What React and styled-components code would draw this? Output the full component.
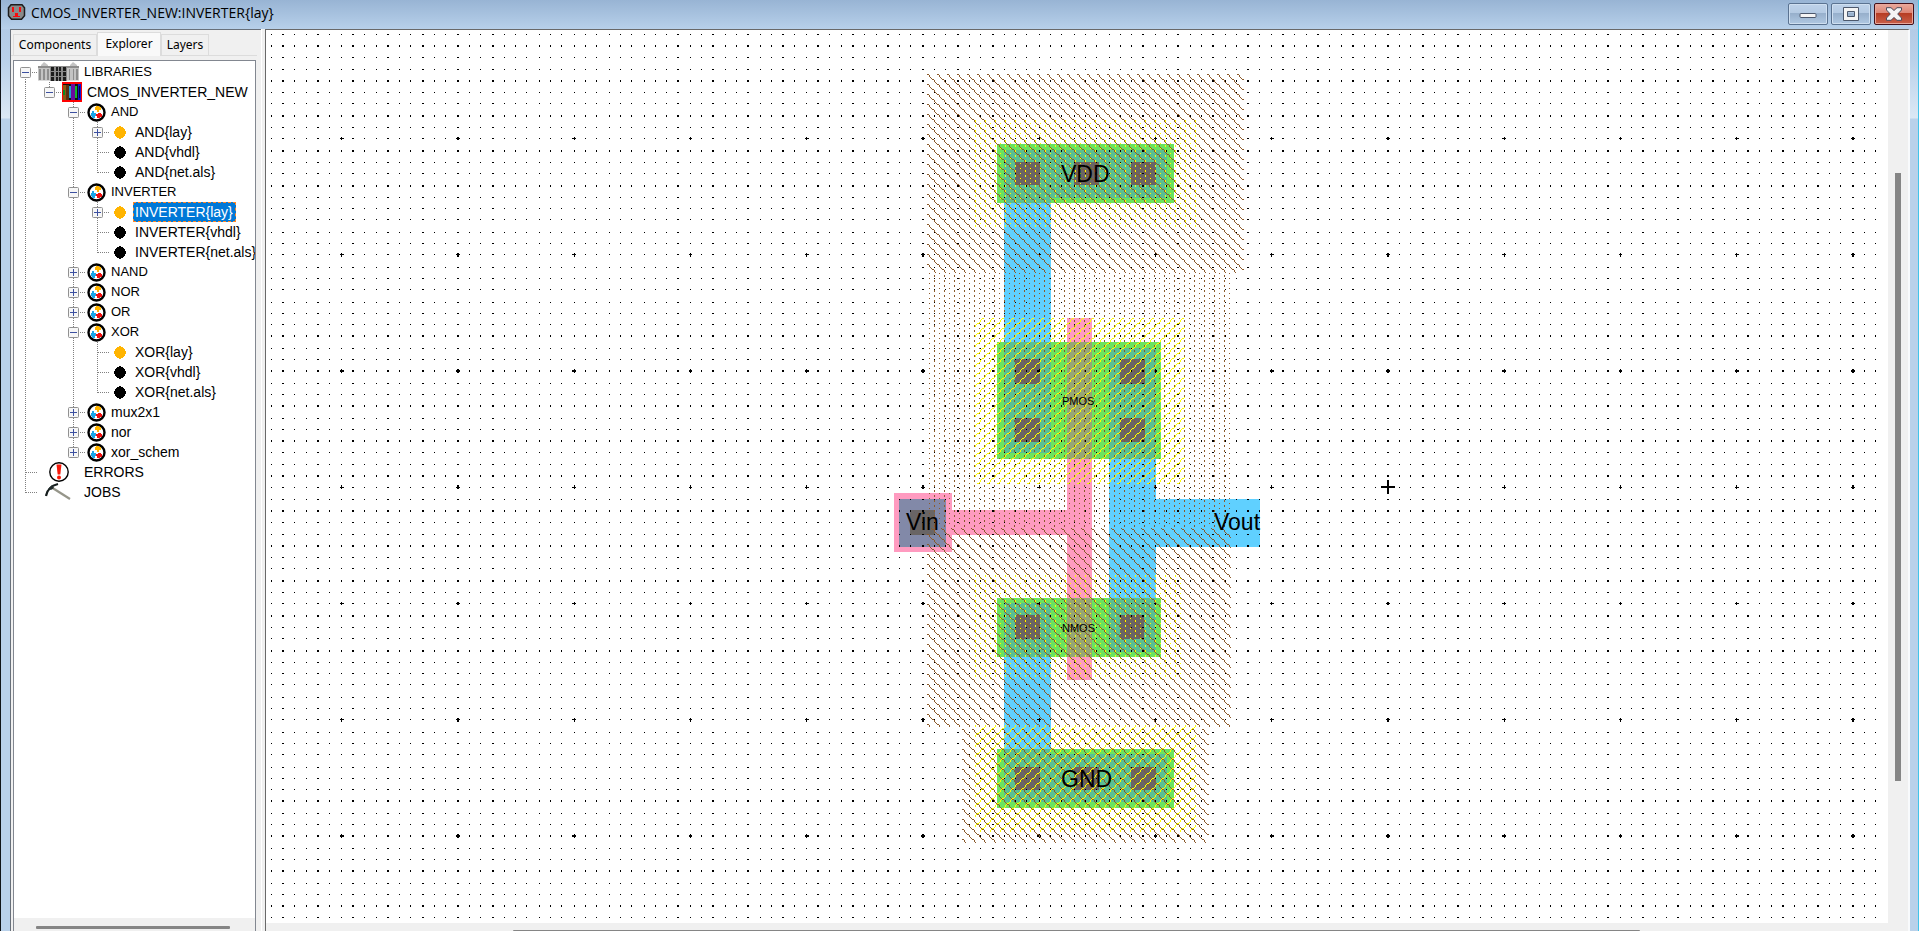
import React from 'react';
import styled, { createGlobalStyle, css } from 'styled-components';

const GlobalStyle = createGlobalStyle`
  * { box-sizing: border-box; }
  html, body { margin: 0; height: 100%; overflow: hidden; }
  #root { height: 100vh; }
  button { font: inherit; }
`;

const Window = styled.div`
  height: 100%;
  display: flex;
  flex-direction: column;
  border-left: 1px solid #101418;
  border-right: 1px solid #42c4ea;
  font-family: "Liberation Sans", Arial, sans-serif;
  color: #000;
  background: linear-gradient(to bottom, #9bb6d5 0, #b3cbe6 29px, #b9d1ea 60px, #dbe8f5 118px, #b9d1ea 119px);
`;

const TitleBar = styled.header`
  flex: none;
  height: 29px;
  display: flex;
  align-items: flex-start;
  gap: 5px;
  padding: 3px 4px 0 6px;
  background: linear-gradient(to bottom, #98b4d4, #b7d0ea);
`;

const Title = styled.h1`
  flex: 1;
  margin: 0;
  font: 400 14px/20px "Open Sans", "Noto Sans", sans-serif;
`;

const Controls = styled.div`
  display: flex;
  gap: 3px;
`;

const ControlButton = styled.button`
  width: 40px;
  height: 22px;
  padding: 0;
  display: grid;
  place-items: center;
  border: 1px solid ${(p) => (p.$danger ? '#43101a' : '#5b7391')};
  border-radius: 2px;
  box-shadow: inset 0 0 0 1px ${(p) => (p.$danger ? '#e8a79b' : '#cfdff0')};
  background: ${(p) =>
    p.$danger
      ? 'linear-gradient(#e9a99c 0, #dc8474 45%, #b63b22 46%, #c9604a 100%)'
      : 'linear-gradient(#bed2e9 0, #b4cae3 45%, #96afcb 46%, #b0c8e2 100%)'};
`;

const Body = styled.div`
  flex: 1;
  min-height: 0;
  display: flex;
  padding: 0 8px 0 9px;
`;

const Sidebar = styled.aside`
  flex: none;
  width: 251px;
  display: flex;
  flex-direction: column;
  border-top: 1px solid #68707a;
  border-left: 1px solid #68707a;
  background: #f0f0f0;
`;

const Tabs = styled.div`
  flex: none;
  display: flex;
  align-items: flex-end;
  height: 26px;
  padding-left: 2px;
  margin-right: 4px;
  border-bottom: 1px solid #dcdcdc;
`;

const Tab = styled.button`
  height: 21px;
  padding: 0;
  width: ${(p) => p.$width}px;
  border: 1px solid #dcdcdc;
  border-bottom: 0;
  background: #f0f0f0;
  font: 400 12px/20px "Noto Sans", "Open Sans", sans-serif;
  ${(p) =>
    p.$selected &&
    css`
      height: 24px;
      margin-bottom: -1px;
      padding-bottom: 2px;
      background: #f9f9f9;
    `}
`;

const TreePane = styled.div`
  flex: 1;
  min-height: 0;
  display: flex;
  flex-direction: column;
  margin: 4px 5px 0 2px;
  border: 1px solid #828790;
  border-bottom: 0;
  background: #fff;
`;

const Tree = styled.ul`
  flex: 1;
  min-height: 0;
  margin: 0;
  padding: 1px 0 0;
  list-style: none;
  overflow: hidden;
`;

const Row = styled.li`
  display: flex;
  height: 20px;
  align-items: center;
  white-space: nowrap;
`;

const Guide = styled.svg`
  flex: none;
  width: 24px;
  height: 20px;
`;

const IconBox = styled.span`
  flex: none;
  width: ${(p) => p.$width}px;
  height: 20px;
  display: grid;
  place-items: center;
  margin-right: 5px;
`;

const Label = styled.span`
  font-size: ${(p) => p.$size}px;
  line-height: 20px;
  ${(p) =>
    p.$selected &&
    css`
      margin-left: -2px;
      padding: 0 2px 0 1px;
      border: 1px dashed #ff8728;
      line-height: 18px;
      color: #fff;
      background: #0078d7;
    `}
`;

const ScrollTrack = styled.div`
  flex: none;
  height: ${(p) => p.$height}px;
  padding: ${(p) => p.$pad};
  background: #f0f0f0;
`;

const ScrollThumb = styled.div`
  height: 3px;
  border-radius: 1px;
  background: #858585;
`;

const Divider = styled.div`
  flex: none;
  width: 4px;
  background: linear-gradient(to right, #fff 1px, #f0f0f0 1px);
`;

const Editor = styled.main`
  flex: 1;
  min-width: 0;
  display: flex;
  flex-direction: column;
  border-top: 1px solid #696969;
  border-left: 1px solid #696969;
  border-right: 2px solid #f8fafc;
  background: #f0f0f0;
`;

const EditorRow = styled.div`
  flex: 1;
  min-height: 0;
  display: flex;
`;

const Canvas = styled.svg`
  flex: 1;
  min-width: 0;
  height: 100%;
  background: #fff;
  font-family: "Liberation Sans", Arial, sans-serif;
`;

const VerticalTrack = styled.div`
  flex: none;
  width: 20px;
  display: flex;
  flex-direction: column;
  align-items: center;
  padding-top: 143px;
  background: #f0f0f0;
`;

const VerticalThumb = styled.div`
  width: 6px;
  height: 81%;
  background: #858585;
`;

/* ---------- explorer icons ---------- */

const CellIcon = () => (
  <svg width="19" height="19" viewBox="0 0 19 19">
    <circle cx="9.5" cy="9.5" r="8" fill="#fff" stroke="#000" strokeWidth="2.4" />
    <path d="M9 3h3v1h2v3h-2v2h-2V7H8V4h1z" fill="#ffb400" />
    <path d="M5 8h2v2h2v3H8v2H5v-2H4v-3h1z" fill="#1aa7e8" />
    <path d="M11 10h3v1h1v3h-2v1h-3v-2H9v-2h2z" fill="#f01010" />
  </svg>
);

const ViewIcon = ({ color }) => (
  <svg width="12" height="13" viewBox="0 0 12 13">
    <path d="M5 0h2v1h2v1h1v1h1v2h1v3h-1v2h-1v1H9v1H7v1H5v-1H3v-1H2v-1H1V8H0V5h1V3h1V2h1V1h2z" fill={color} />
  </svg>
);

const LibrariesIcon = () => (
  <svg width="41" height="20" viewBox="0 0 41 20">
    <path d="M3 3l3-3 4 3v1h22V3l3-3 4 3v1h2v14H0V4h3z" fill="#c4c4c4" />
    <path d="M0 4h12v2H0zM29 4h12v2H29z" fill="#8c8c8c" />
    <path d="M1 7h2v11H1zM5 7h2v11H5zM9 7h2v11H9zM31 7h1v11h-1zM35 7h1v11h-1zM38 7h2v11h-2z" fill="#8e8e8e" />
    <path d="M12 4h17v15H12z" fill="#8a8a8a" />
    <path d="M13 5h3v4h-3zm5 0h2v4h-2zm3 0h2v4h-2zm4 0h3v4h-3zM13 10h3v4h-3zm5 0h2v4h-2zm3 0h2v4h-2zm4 0h3v4h-3zM13 15h3v4h-3zm5 0h2v4h-2zm3 0h2v4h-2zm4 0h3v4h-3z" fill="#1c1c1c" />
    <path d="M0 18h12v1H0zM29 18h12v1H29z" fill="#dcdcdc" />
  </svg>
);

const LibraryIcon = () => (
  <svg width="20" height="20" viewBox="0 0 20 20">
    <path d="M0 0h20v20H0z" fill="#f00" />
    <path d="M1 2h18v16H1z" fill="#101010" />
    <path d="M1 3h3v15H1z" fill="#8a5a10" />
    <path d="M1 8h2v5H1z" fill="#0a8a20" />
    <path d="M4 3h3v15H4z" fill="#5b2f10" />
    <path d="M7 4h2v12H7z" fill="#20a0d0" />
    <path d="M9 2h4v16H9z" fill="#6a0a9c" />
    <path d="M13 4h2v12h-2z" fill="#10b828" />
    <path d="M16 2h3v16h-3z" fill="#1414d0" />
    <path d="M17 4h1v12h-1z" fill="#050540" />
  </svg>
);

const ErrorsIcon = () => (
  <svg width="20" height="20" viewBox="0 0 20 20">
    <circle cx="10" cy="10" r="9.2" fill="#fff" stroke="#000" strokeWidth="1.4" />
    <path d="M7.500 2.500h5l-1.200 10H8.700z" fill="#f81808" />
    <circle cx="10" cy="15.500" r="2" fill="#f81808" />
  </svg>
);

const JobsIcon = () => (
  <svg width="27" height="20" viewBox="0 0 27 20">
    <path d="M6 5l19 12" stroke="#96968a" strokeWidth="2.2" />
    <path d="M1 14C2 8 5 4 13 2" fill="none" stroke="#141c1c" strokeWidth="2.2" />
    <path d="M3 7l4-4 2 3-3 2z" fill="#202a2a" />
  </svg>
);

const AppIcon = () => (
  <svg width="19" height="19" viewBox="0 0 19 19">
    <path d="M4 1.750h11l2.500 3v8l-3 3.500h-10l-3-3.500v-8z" fill="#8a8a8a" stroke="#1c1c1c" strokeWidth="1.500" />
    <path d="M5 4h2v5H5zM12 4h2v5h-2zM8 10h3v3h2v1H6v-1h2z" fill="#f80c0c" />
  </svg>
);

const ICONS = {
  libraries: [41, <LibrariesIcon />],
  library: [20, <LibraryIcon />],
  cell: [20, <CellIcon />],
  layout: [20, <ViewIcon color="#ffb400" />],
  text: [20, <ViewIcon color="#000" />],
  errors: [41, <ErrorsIcon />],
  jobs: [41, <JobsIcon />],
};

/* Guides: one letter per 24px column. "|" passes through, "+" and "L" branch
   to the row (L is the last child), "." is empty. */
const TREE = [
  { g: 'T', box: '-', icon: 'libraries', text: 'LIBRARIES', size: 13 },
  { g: '|L', box: '-', icon: 'library', text: 'CMOS_INVERTER_NEW', size: 14 },
  { g: '|.+', box: '-', icon: 'cell', text: 'AND', size: 13 },
  { g: '|.|+', box: '+', icon: 'layout', text: 'AND{lay}', size: 14 },
  { g: '|.|+', icon: 'text', text: 'AND{vhdl}', size: 14 },
  { g: '|.|L', icon: 'text', text: 'AND{net.als}', size: 14 },
  { g: '|.+', box: '-', icon: 'cell', text: 'INVERTER', size: 13 },
  { g: '|.|+', box: '+', icon: 'layout', text: 'INVERTER{lay}', size: 14, selected: true },
  { g: '|.|+', icon: 'text', text: 'INVERTER{vhdl}', size: 14 },
  { g: '|.|L', icon: 'text', text: 'INVERTER{net.als}', size: 14 },
  { g: '|.+', box: '+', icon: 'cell', text: 'NAND', size: 13 },
  { g: '|.+', box: '+', icon: 'cell', text: 'NOR', size: 13 },
  { g: '|.+', box: '+', icon: 'cell', text: 'OR', size: 13 },
  { g: '|.+', box: '-', icon: 'cell', text: 'XOR', size: 13 },
  { g: '|.|+', icon: 'layout', text: 'XOR{lay}', size: 14 },
  { g: '|.|+', icon: 'text', text: 'XOR{vhdl}', size: 14 },
  { g: '|.|L', icon: 'text', text: 'XOR{net.als}', size: 14 },
  { g: '|.+', box: '+', icon: 'cell', text: 'mux2x1', size: 14 },
  { g: '|.+', box: '+', icon: 'cell', text: 'nor', size: 14 },
  { g: '|.L', box: '+', icon: 'cell', text: 'xor_schem', size: 14 },
  { g: '+', icon: 'errors', text: 'ERRORS', size: 14 },
  { g: 'L', icon: 'jobs', text: 'JOBS', size: 14 },
];

const GUIDE_PATHS = {
  '|': 'M11.5 0V20',
  '+': 'M11.5 0V20M12 10.5H23',
  L: 'M11.5 0V11M12 10.5H23',
  T: 'M11.5 11V20M12 10.5H23',
  '.': '',
};

function TreeGuide({ kind, box }) {
  return (
    <Guide aria-hidden="true">
      <path d={GUIDE_PATHS[kind]} fill="none" stroke="#808080" strokeDasharray="1 1" shapeRendering="crispEdges" />
      {box && (
        <>
          <rect x="6.5" y="5.5" width="10" height="10" rx="1" fill="#f6f6f6" stroke="#919191" />
          <path d={box === '+' ? 'M8 10.5h7M11.5 7v7' : 'M8 10.5h7'} stroke="#3c50a0" />
        </>
      )}
    </Guide>
  );
}

function TreeRow({ item }) {
  const [width, icon] = ICONS[item.icon];
  const last = item.g.length - 1;
  return (
    <Row>
      {[...item.g].map((kind, i) => (
        <TreeGuide key={i} kind={kind} box={i === last ? item.box : undefined} />
      ))}
      <IconBox $width={width}>{icon}</IconBox>
      <Label $size={item.size} $selected={item.selected}>{item.text}</Label>
    </Row>
  );
}

/* ---------- layout canvas ---------- */

/* The layout is rasterised on a device grid shown at 125%: each run of four
   device pixels covers five screen pixels, the first one being doubled. */
const STEP = [0, 2, 3, 4];
const span = (n, origin) => {
  const m = Math.floor(n / 4);
  const k = n - m * 4;
  return [origin + m * 5 + STEP[k], k === 0 ? 2 : 1];
};
const device = (x0, y0, w, h) => {
  const [ax] = span(x0, 2);
  const [bx, bw] = span(x0 + w - 1, 2);
  const [ay] = span(y0, 0);
  const [by, bh] = span(y0 + h - 1, 0);
  return `M${ax} ${ay}h${bx + bw - ax}v${by + bh - ay}h${ax - bx - bw}z`;
};

function gridPath() {
  const parts = [];
  for (let i = -56; i <= 82; i++) {
    const q = Math.floor(736 + 9.3 * i + 0.2);
    for (let j = -9; j <= 67; j++) {
      const r = Math.floor(110 + 9.3 * j + 0.85);
      parts.push(device(q, r, 1, 1));
      if (i % 10 === 0 && j % 10 === 0) {
        parts.push(device(q - 1, r, 3, 1), device(q, r - 1, 1, 3));
      }
    }
  }
  return parts.join('');
}
const GRID = gridPath();

function hatch(test) {
  const parts = [];
  for (let q = 0; q < 8; q++) {
    for (let r = 0; r < 8; r++) {
      if (test(q, r)) {
        const [x, w] = span(q, 0);
        const [y, h] = span(r, 0);
        parts.push(`M${x} ${y}h${w}v${h}h${-w}z`);
      }
    }
  }
  return parts.join('');
}

const HATCHES = [
  ['well', '#8b5a2b', hatch((q, r) => (q - r + 8) % 8 === 1)],
  ['wellDots', '#8b5a2b', hatch((q, r) => (q === 1 && r % 4 === 0) || (q === 5 && r % 4 === 2))],
  ['select', '#ffff00', hatch((q, r) => (q + r) % 8 === 6)],
  ['selectDots', '#ffff00', hatch((q, r) => (q === 2 && r % 4 === 0) || (q === 6 && r % 4 === 2))],
];

const BLUE = '#60d0ff';
const GREEN = '#6be35e';
const PINK = '#ff9bc0';
const TEAL = '#5abf92';
const OLIVE = '#96a674';
const GREY = '#696565';
const PAD = '#8289a8';

/* colour, left, top, right, bottom */
const SHAPES = [
  [BLUE, 1004, 203, 1051, 342],
  [BLUE, 1109, 459, 1156, 598],
  [BLUE, 1156, 499, 1260, 547],
  [BLUE, 1004, 657, 1051, 749],
  [PINK, 1067, 318, 1092, 680],
  [PINK, 952, 510, 1067, 535],
  [PINK, 894, 493, 952, 552],
  [PAD, 899, 499, 946, 547],
  [GREEN, 997, 144, 1174, 203],
  [TEAL, 1004, 150, 1167, 198],
  [TEAL, 1004, 198, 1051, 203],
  [GREEN, 997, 342, 1161, 459],
  [TEAL, 1004, 342, 1051, 453],
  [TEAL, 1109, 348, 1156, 459],
  [OLIVE, 1067, 342, 1092, 459],
  [GREEN, 997, 598, 1161, 657],
  [TEAL, 1004, 603, 1051, 657],
  [TEAL, 1109, 598, 1156, 652],
  [OLIVE, 1067, 598, 1092, 657],
  [GREEN, 997, 749, 1174, 808],
  [TEAL, 1004, 754, 1167, 802],
  [TEAL, 1004, 749, 1051, 754],
  [GREY, 910, 510, 935, 535],
  [GREY, 1015, 162, 1040, 185],
  [GREY, 1074, 162, 1099, 185],
  [GREY, 1131, 162, 1156, 185],
  [GREY, 1015, 359, 1040, 384],
  [GREY, 1120, 359, 1145, 384],
  [GREY, 1015, 418, 1040, 442],
  [GREY, 1120, 418, 1145, 442],
  [GREY, 1015, 615, 1040, 639],
  [GREY, 1120, 615, 1144, 639],
  [GREY, 1015, 767, 1040, 790],
  [GREY, 1074, 767, 1099, 790],
  [GREY, 1131, 767, 1156, 790],
];

const HATCHED = [
  ['wellDots', 927, 273, 1231, 528],
  ['selectDots', 975, 120, 1196, 227],
  ['selectDots', 975, 575, 1182, 680],
  ['well', 927, 74, 1244, 273],
  ['well', 927, 528, 1231, 727],
  ['well', 962, 729, 1209, 843],
  ['select', 975, 318, 1185, 484],
  ['select', 975, 725, 1196, 832],
];

const NAMES = [
  ['VDD', 1061, 182, 23],
  ['GND', 1061, 787, 23],
  ['Vin', 906, 530, 23],
  ['Vout', 1214, 530, 23],
  ['PMOS', 1062, 405, 11],
  ['NMOS', 1062, 632, 11],
];

function LayoutCanvas() {
  return (
    <Canvas role="img" aria-label="CMOS inverter layout">
      <defs>
        {HATCHES.map(([id, color, d]) => (
          <pattern key={id} id={id} x="2" y="0" width="10" height="10" patternUnits="userSpaceOnUse">
            <path d={d} fill={color} shapeRendering="crispEdges" />
          </pattern>
        ))}
      </defs>
      <g transform="translate(-266 -30)" shapeRendering="crispEdges">
        {SHAPES.map(([fill, x, y, r, b], i) => (
          <rect key={i} x={x} y={y} width={r - x} height={b - y} fill={fill} />
        ))}
        <path d={GRID} fill="#000" />
        {HATCHED.map(([id, x, y, r, b], i) => (
          <rect key={i} x={x} y={y} width={r - x} height={b - y} fill={`url(#${id})`} />
        ))}
        {NAMES.map(([text, x, y, size]) => (
          <text key={text} x={x} y={y} fontSize={size}>{text}</text>
        ))}
        <path d="M1381 487h14M1388 480v14" stroke="#000" strokeWidth="2" />
      </g>
    </Canvas>
  );
}

export default function App() {
  return (
    <>
      <GlobalStyle />
      <Window>
        <TitleBar>
          <AppIcon />
          <Title>CMOS_INVERTER_NEW:INVERTER{'{lay}'}</Title>
          <Controls>
            <ControlButton aria-label="Minimize">
              <svg width="18" height="14" viewBox="0 0 18 14">
                <rect x="1" y="6.500" width="16" height="4" rx="1" fill="#f4f4f4" stroke="#4c586c" />
              </svg>
            </ControlButton>
            <ControlButton aria-label="Maximize">
              <svg width="18" height="14" viewBox="0 0 18 14">
                <path d="M1.500 .5h15v13h-15zM5.500 4.500v5h7v-5z" fill="#f4f4f4" fillRule="evenodd" stroke="#4c586c" />
              </svg>
            </ControlButton>
            <ControlButton aria-label="Close" $danger>
              <svg width="18" height="14" viewBox="0 0 18 14">
                <path d="M1.500 .7h4.500l3 2.800 3-2.800h4.500v2.300L12.700 7l3.800 4v2.300H12l-3-2.800-3 2.800H1.500V11l3.800-4-3.800-4z" fill="#f4f4f4" stroke="#4c4c5c" />
              </svg>
            </ControlButton>
          </Controls>
        </TitleBar>
        <Body>
          <Sidebar>
            <Tabs role="tablist">
              <Tab role="tab" $width={84}>Components</Tab>
              <Tab role="tab" aria-selected="true" $width={64} $selected>Explorer</Tab>
              <Tab role="tab" $width={48}>Layers</Tab>
            </Tabs>
            <TreePane>
              <Tree>
                {TREE.map((item) => (
                  <TreeRow key={item.text} item={item} />
                ))}
              </Tree>
              <ScrollTrack $height={13} $pad="8px 25px 0 22px">
                <ScrollThumb />
              </ScrollTrack>
            </TreePane>
          </Sidebar>
          <Divider />
          <Editor>
            <EditorRow>
              <LayoutCanvas />
              <VerticalTrack>
                <VerticalThumb />
              </VerticalTrack>
            </EditorRow>
            <ScrollTrack $height={8} $pad="7px 268px 0 247px">
              <ScrollThumb />
            </ScrollTrack>
          </Editor>
        </Body>
      </Window>
    </>
  );
}
